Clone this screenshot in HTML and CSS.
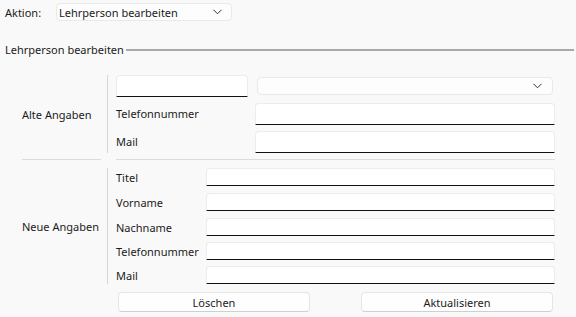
FILE: index.html
```html
<!DOCTYPE html>
<html lang="de">
<head>
<meta charset="utf-8">
<title>Lehrperson bearbeiten</title>
<link rel="stylesheet" href="styles.css">
</head>
<body>
<div class="top">
  <span class="top-label">Aktion:</span>
  <div class="combo combo-action">
    <span>Lehrperson bearbeiten</span>
    <svg class="chev" width="9" height="6" viewBox="0 0 9 6"><path d="M0.5 0.8 L4.5 4.8 L8.5 0.8" fill="none" stroke="#333" stroke-width="1"/></svg>
  </div>
</div>

<div class="legend">
  <span>Lehrperson bearbeiten</span>
  <div class="legend-line"></div>
</div>

<div class="section alt">
  <div class="side">Alte Angaben</div>
  <div class="vline"></div>
  <div class="fields">
    <div class="row">
      <div class="tb tb-small"></div>
      <div class="combo combo-wide">
        <span></span>
        <svg class="chev" width="9" height="6" viewBox="0 0 9 6"><path d="M0.5 0.8 L4.5 4.8 L8.5 0.8" fill="none" stroke="#333" stroke-width="1"/></svg>
      </div>
    </div>
    <div class="row gap6">
      <span class="lbl">Telefonnummer</span>
      <div class="tb tb-old"></div>
    </div>
    <div class="row gap6">
      <span class="lbl">Mail</span>
      <div class="tb tb-old"></div>
    </div>
  </div>
</div>

<div class="sep">
  <div class="sep-left"></div>
  <div class="sep-right"></div>
</div>

<div class="section neu">
  <div class="side">Neue Angaben</div>
  <div class="vline"></div>
  <div class="fields">
    <div class="nrow"><span class="lbl">Titel</span><div class="tb tb-new"></div></div>
    <div class="nrow"><span class="lbl">Vorname</span><div class="tb tb-new"></div></div>
    <div class="nrow"><span class="lbl">Nachname</span><div class="tb tb-new"></div></div>
    <div class="nrow"><span class="lbl">Telefonnummer</span><div class="tb tb-new"></div></div>
    <div class="nrow"><span class="lbl">Mail</span><div class="tb tb-new"></div></div>
  </div>
</div>

<div class="buttons">
  <button class="btn btn-del">Löschen</button>
  <button class="btn btn-upd">Aktualisieren</button>
</div>
</body>
</html>
```
FILE: styles.css
```css
html, body {
  margin: 0;
  padding: 0;
}
body {
  background: #f9f9f9;
  font-family: "Noto Sans", "Open Sans", sans-serif;
  font-size: 11px;
  color: #1b1b1b;
  width: 576px;
  height: 317px;
  overflow: hidden;
  white-space: nowrap;
}
.top {
  display: flex;
  align-items: center;
  padding: 3px 0 0 5px;
  height: 18px;
}
.top-label {
  width: 51px;
}
.combo {
  box-sizing: border-box;
  display: flex;
  align-items: center;
  justify-content: space-between;
  background: #fdfdfd;
  border: 1px solid #e9e9e9;
  border-radius: 4px;
}
.combo-action {
  width: 176px;
  height: 18px;
  padding: 0 9px 0 2px;
}
.combo-wide {
  width: 296px;
  height: 18px;
  margin-left: 9px;
  margin-top: 2px;
  padding: 0 10px 0 4px;
}
.chev {
  display: block;
}
.legend {
  display: flex;
  align-items: center;
  margin-top: 20px;
  padding-left: 5px;
  height: 16px;
}
.legend-line {
  flex: 1;
  height: 2px;
  background: #a9a9a9;
  margin: 1px 2px 0 2px;
}
.section {
  display: flex;
  padding-left: 22px;
}
.alt {
  margin-top: 18px;
}
.neu {
  margin-top: 8px;
}
.side {
  width: 79px;
  display: flex;
  align-items: center;
}
.vline {
  width: 1px;
  background: #d6d6d6;
  margin-left: 6px;
}
.fields {
  margin-left: 8px;
  width: 439px;
}
.row {
  display: flex;
  align-items: flex-start;
}
.row .lbl {
  flex: 1;
  height: 22px;
  line-height: 22px;
}
.gap6 {
  margin-top: 6px;
}
.tb {
  box-sizing: border-box;
  background: #ffffff;
  border: 1px solid #ececec;
  border-bottom: 1px solid #111111;
  border-radius: 4px 4px 0 0;
}
.tb-small {
  width: 132px;
  height: 22px;
}
.tb-old {
  width: 300px;
  height: 22px;
}
.nrow {
  display: flex;
  align-items: center;
  height: 18px;
}
.nrow .lbl {
  width: 90px;
}
.nrow:nth-child(2),
.nrow:nth-child(3) {
  margin-top: 7px;
}
.nrow:nth-child(4),
.nrow:nth-child(5) {
  margin-top: 6px;
}
.tb-new {
  width: 349px;
  height: 18px;
}
.sep {
  display: flex;
  margin-top: 6px;
  padding-left: 22px;
}
.sep-left {
  width: 79px;
  height: 1px;
  background: #dcdcdc;
}
.sep-right {
  width: 439px;
  height: 1px;
  margin-left: 15px;
  background: #dcdcdc;
}
.buttons {
  display: flex;
  margin-top: 8px;
  padding-left: 118px;
}
.btn {
  box-sizing: border-box;
  width: 192px;
  height: 20px;
  padding: 0;
  font-family: inherit;
  font-size: 11px;
  color: #1b1b1b;
  background: #fefefe;
  border: 1px solid #e5e5e5;
  border-bottom-color: #cfcfcf;
  border-radius: 4px;
}
.btn-upd {
  margin-left: 51px;
}
```
